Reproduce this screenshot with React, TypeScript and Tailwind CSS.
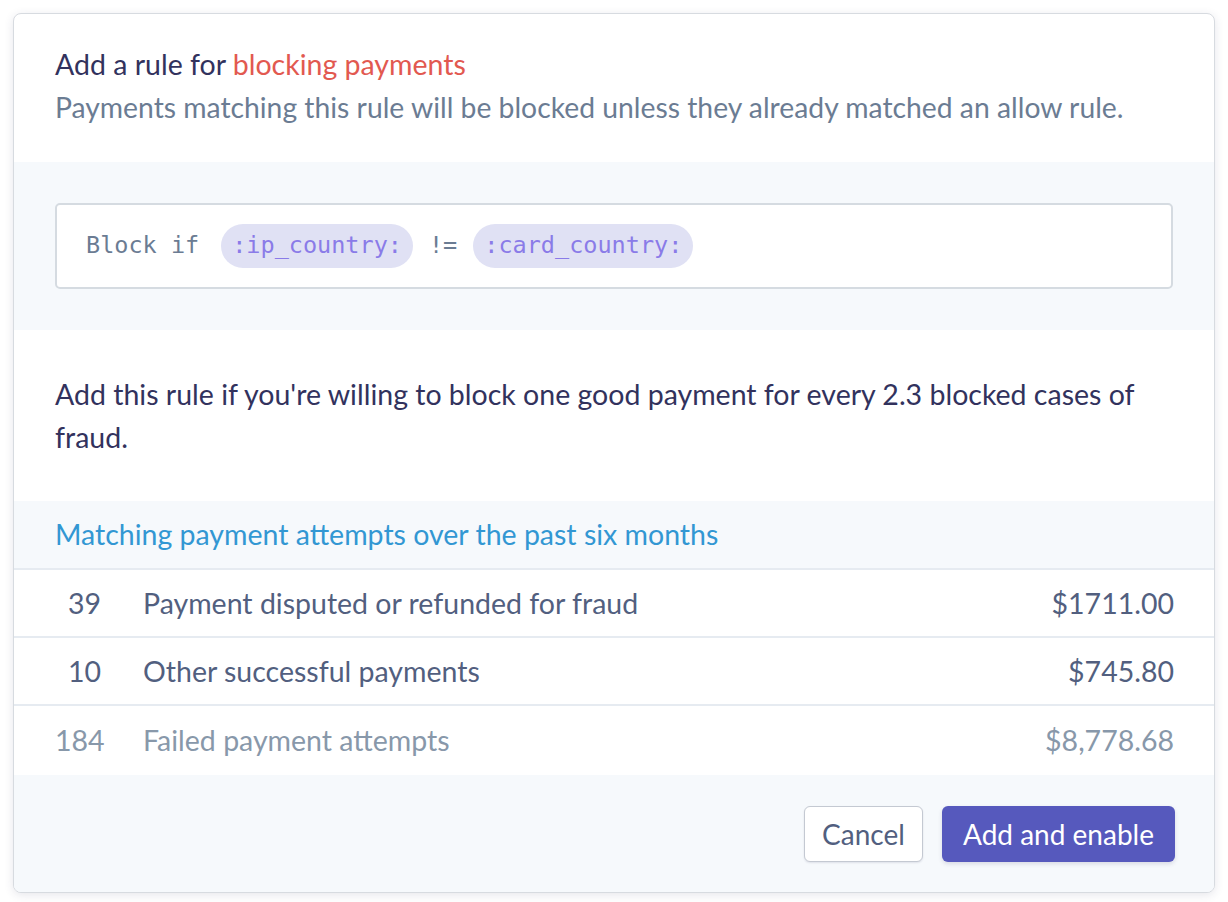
export default function App() {
  const rows = [
    { n: "39", label: "Payment disputed or refunded for fraud", amount: "$1711.00", faded: false },
    { n: "10", label: "Other successful payments", amount: "$745.80", faded: false },
    { n: "184", label: "Failed payment attempts", amount: "$8,778.68", faded: true },
  ];

  return (
    <div className="min-h-[902px] w-[1228px] bg-white p-[13px] font-['Lato',sans-serif]">
      <div className="overflow-hidden rounded-lg border border-[#d7dbe0] bg-white shadow-[0_2px_10px_rgba(50,50,93,0.12)]">
        {/* Header */}
        <div className="px-[41px] pb-[33px] pt-[29px]">
          <h1 className="text-[28.5px] leading-[43px] text-[#32325d]">
            Add a rule for <span className="text-[#e25950]">blocking payments</span>
          </h1>
          <p className="text-[28.3px] leading-[43px] text-[#6b7c93]">
            Payments matching this rule will be blocked unless they already matched an allow rule.
          </p>
        </div>

        {/* Rule editor */}
        <div className="bg-[#f6f9fc] px-[41px] py-[41px]">
          <div className="flex h-[86px] items-center rounded-[5px] border-2 border-[#d5dbe1] bg-white px-[29px] font-['DejaVu_Sans_Mono',monospace] text-[23.5px]">
            <span className="text-[#6b7c93]">Block if</span>
            <span className="ml-[22px] rounded-full bg-[#e0e1f4] px-[11px] py-[4px] text-[#8a7be8]">:ip_country:</span>
            <span className="mx-[16px] text-[#6b7c93]">!=</span>
            <span className="rounded-full bg-[#e0e1f4] px-[11px] py-[4px] text-[#8a7be8]">:card_country:</span>
          </div>
        </div>

        {/* Recommendation */}
        <div className="px-[41px] pb-[42px] pt-[43px]">
          <p className="text-[28.5px] leading-[43px] text-[#32325d]">
            Add this rule if you're willing to block one good payment for every 2.3 blocked cases of fraud.
          </p>
        </div>

        {/* Matching attempts */}
        <div className="flex h-[67px] items-center bg-[#f6f9fc] px-[41px]">
          <span className="text-[28.5px] text-[#3297d3]">Matching payment attempts over the past six months</span>
        </div>
        {rows.map((r) => (
          <div
            key={r.n}
            className={`flex items-center border-t-2 border-[#e6ebf1] pl-[41px] pr-[40px] text-[28.5px] ${
              r.faded ? "h-[71px] text-[#8898aa]" : "h-[68px] text-[#525f7f]"
            }`}
          >
            <span className="w-[46px] text-right">{r.n}</span>
            <span className="ml-[42px] flex-1">{r.label}</span>
            <span>{r.amount}</span>
          </div>
        ))}

        {/* Footer */}
        <div className="flex justify-end gap-[19px] bg-[#f6f9fc] px-[39px] pb-[30px] pt-[31px]">
          <button className="h-[56px] w-[119px] rounded-[6px] border border-[#c4c9d2] bg-white text-[28px] text-[#525f7f] shadow-[0_1px_2px_rgba(50,50,93,0.12)]">
            Cancel
          </button>
          <button className="h-[56px] w-[233px] rounded-[6px] bg-[#5659bd] text-[28px] text-white shadow-[0_2px_4px_rgba(50,50,93,0.15)]">
            Add and enable
          </button>
        </div>
      </div>
    </div>
  );
}
